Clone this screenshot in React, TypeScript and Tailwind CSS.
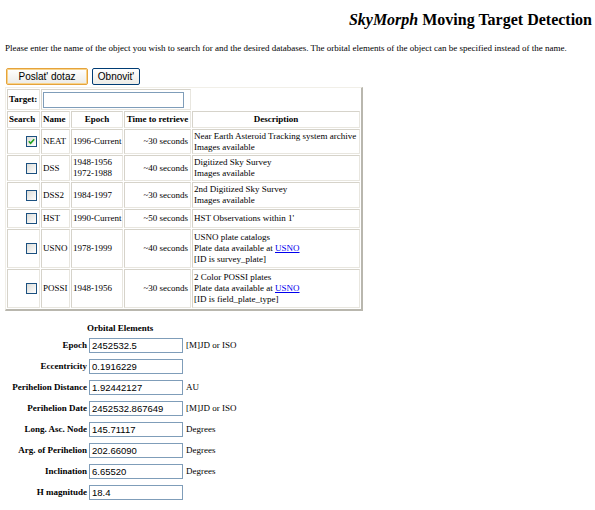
import React from 'react'

const serif = { fontFamily: '"Liberation Serif", "Times New Roman", serif' }
const sans = { fontFamily: '"Liberation Sans", Tahoma, sans-serif' }

interface DbRow {
  name: string
  epoch: string[]
  time: string
  desc: React.ReactNode[]
  checked?: boolean
  h: string
}

const rows: DbRow[] = [
  { name: 'NEAT', epoch: ['1996-Current'], time: '~30 seconds', desc: ['Near Earth Asteroid Tracking system archive', 'Images available'], checked: true, h: 'h-[25px]' },
  { name: 'DSS', epoch: ['1948-1956', '1972-1988'], time: '~40 seconds', desc: ['Digitized Sky Survey', 'Images available'], h: 'h-[26px]' },
  { name: 'DSS2', epoch: ['1984-1997'], time: '~30 seconds', desc: ['2nd Digitized Sky Survey', 'Images available'], h: 'h-[26px]' },
  { name: 'HST', epoch: ['1990-Current'], time: '~50 seconds', desc: ["HST Observations within 1'"], h: 'h-[19px]' },
  {
    name: 'USNO', epoch: ['1978-1999'], time: '~40 seconds', h: 'h-[39px]',
    desc: ['USNO plate catalogs', <>Plate data available at <a className="text-[#0000ee] underline">USNO</a></>, '[ID is survey_plate]'],
  },
  {
    name: 'POSSI', epoch: ['1948-1956'], time: '~30 seconds', h: 'h-[39px]',
    desc: ['2 Color POSSI plates', <>Plate data available at <a className="text-[#0000ee] underline">USNO</a></>, '[ID is field_plate_type]'],
  },
]

const orbital = [
  { label: 'Epoch', value: '2452532.5', unit: '[M]JD or ISO' },
  { label: 'Eccentricity', value: '0.1916229', unit: '' },
  { label: 'Perihelion Distance', value: '1.92442127', unit: 'AU' },
  { label: 'Perihelion Date', value: '2452532.867649', unit: '[M]JD or ISO' },
  { label: 'Long. Asc. Node', value: '145.71117', unit: 'Degrees' },
  { label: 'Arg. of Perihelion', value: '202.66090', unit: 'Degrees' },
  { label: 'Inclination', value: '6.65520', unit: 'Degrees' },
  { label: 'H magnitude', value: '18.4', unit: '' },
]

const cell = 'border border-t-[#d6d3ca] border-l-[#d6d3ca] border-r-[#e8e6df] border-b-[#e8e6df] px-[1px] py-0 align-middle overflow-hidden whitespace-nowrap'

function CheckBox({ checked }: { checked?: boolean }) {
  return (
    <span className="inline-flex h-[11px] w-[11px] items-center justify-center border border-[#1c5180] bg-gradient-to-br from-[#dcdcd7] to-[#ffffff]">
      {checked && (
        <svg width="7" height="7" viewBox="0 0 7 7">
          <path d="M0.8 3.2 L2.6 5.2 L6.2 1.2" stroke="#21a121" strokeWidth="1.6" fill="none" />
        </svg>
      )}
    </span>
  )
}

function TextBox({ value, w, h }: { value?: string; w: string; h: string }) {
  return (
    <div
      className={`${w} ${h} border border-[#7f9db9] bg-white pl-[2px] text-[9.5px] leading-none flex items-center text-black`}
      style={sans}
    >
      {value}
    </div>
  )
}

export default function App() {
  return (
    <div className="w-[595px] h-[510px] bg-white text-black overflow-hidden" style={serif}>
      <h1 className="pt-[11px] pr-[3px] text-right text-[16px] leading-[18px] font-bold">
        <i>SkyMorph</i> Moving Target Detection
      </h1>

      <p className="mt-[14px] pl-[5px] text-[9px] leading-[10px] whitespace-nowrap">
        Please enter the name of the object you wish to search for and the desired databases. The orbital elements of the object can be specified instead of the name.
      </p>

      <div className="mt-[15px] flex gap-[4px] pl-[6px]" style={sans}>
        <div className="flex h-[17px] w-[82px] items-center justify-center rounded-[2px] border border-[#e5a33b] bg-gradient-to-b from-[#ffffff] to-[#ecebe6] text-[10px] shadow-[inset_0_0_0_1px_#f8d38a]">
          Poslat' dotaz
        </div>
        <div className="flex h-[17px] w-[48px] items-center justify-center rounded-[2px] border border-[#003c74] bg-gradient-to-b from-[#ffffff] to-[#ecebe6] text-[10px]">
          Obnovit'
        </div>
      </div>

      <table className="ml-[5px] mt-[2px] w-[358px] table-fixed border-separate border-spacing-[1px] border border-t-[#f1efe8] border-l-[#f1efe8] border-r-[#b9b7ae] border-b-[#b9b7ae] border-r-2 border-b-2 text-[9px] leading-[11px]">
        <colgroup>
          <col className="w-[33px]" />
          <col className="w-[29px]" />
          <col className="w-[52px]" />
          <col className="w-[67px]" />
          <col className="w-[168px]" />
        </colgroup>
        <tbody>
          <tr>
            <td className={`${cell} h-[21px] font-bold`}>Target:</td>
            <td className={cell} colSpan={3}>
              <TextBox w="w-[141px]" h="h-[16px]" />
            </td>
            <td />
          </tr>
          <tr className="font-bold text-center">
            <td className={`${cell} h-[17px] text-left`}>Search</td>
            <td className={`${cell} text-left`}>Name</td>
            <td className={cell}>Epoch</td>
            <td className={cell}>Time to retrieve</td>
            <td className={cell}>Description</td>
          </tr>
          {rows.map((r) => (
            <tr key={r.name}>
              <td className={`${cell} ${r.h} text-right pr-[2px]`}>
                <span className="inline-flex align-middle">
                  <CheckBox checked={r.checked} />
                </span>
              </td>
              <td className={cell}>{r.name}</td>
              <td className={cell}>
                {r.epoch.map((e) => (
                  <div key={e}>{e}</div>
                ))}
              </td>
              <td className={`${cell} text-right pr-[2px]`}>{r.time}</td>
              <td className={cell}>
                {r.desc.map((d, i) => (
                  <div key={i}>{d}</div>
                ))}
              </td>
            </tr>
          ))}
        </tbody>
      </table>

      <div className="mt-[12px] text-[9px] leading-[11px]">
        <div className="pl-[87px] font-bold">Orbital Elements</div>
        <div className="mt-[4px] flex flex-col gap-[6px]">
          {orbital.map((o) => (
            <div key={o.label} className="flex h-[15px] items-center">
              <div className="w-[89px] pr-[2px] text-right font-bold whitespace-nowrap">{o.label}</div>
              <TextBox value={o.value} w="w-[94px]" h="h-[15px]" />
              <div className="pl-[3px] whitespace-nowrap">{o.unit}</div>
            </div>
          ))}
        </div>
      </div>
    </div>
  )
}
